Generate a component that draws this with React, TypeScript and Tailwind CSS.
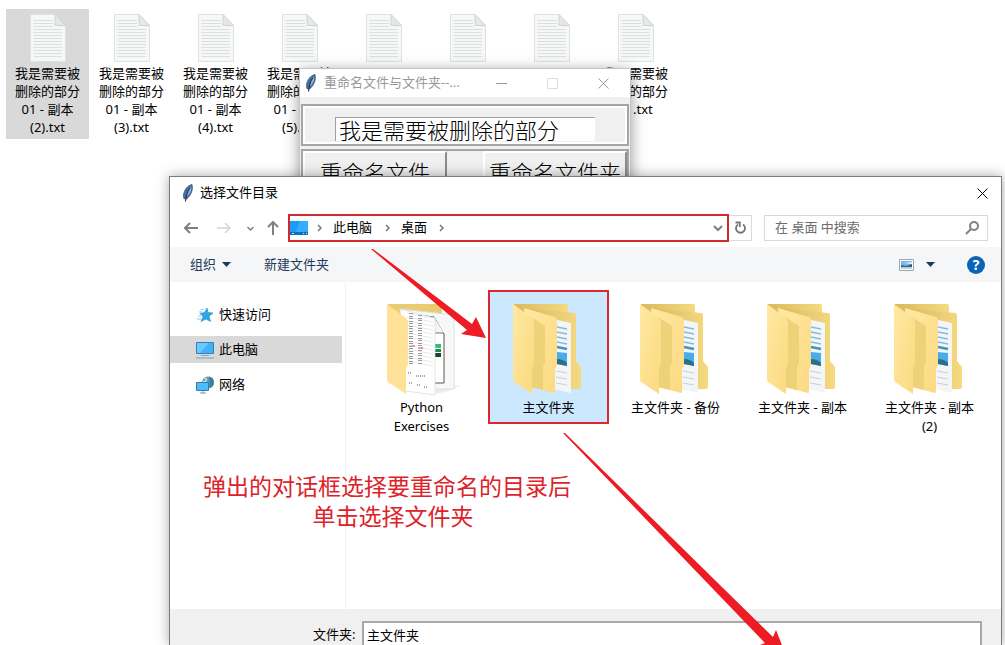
import { useState } from "react";

const files = [
  { id: 2, lines: ["我是需要被", "删除的部分", "01 - 副本", "(2).txt"] },
  { id: 3, lines: ["我是需要被", "删除的部分", "01 - 副本", "(3).txt"] },
  { id: 4, lines: ["我是需要被", "删除的部分", "01 - 副本", "(4).txt"] },
  { id: 5, lines: ["我是需要被", "删除的部分", "01 - 副本", "(5).txt"] },
  { id: 6, lines: [] },
  { id: 7, lines: [] },
  { id: 8, lines: [] },
  { id: 9, lines: ["我是需要被", "删除的部分", "01.txt"] },
];

const folders = [
  { name: "Python Exercises", kind: "sheets" },
  { name: "主文件夹", kind: "docs" },
  { name: "主文件夹 - 备份", kind: "docs" },
  { name: "主文件夹 - 副本", kind: "docs" },
  { name: "主文件夹 - 副本 (2)", kind: "docs" },
];

const TextFileIcon = () => (
  <svg width="36" height="48" viewBox="0 0 36 48" className="shrink-0">
    <path d="M.5.5H25L35.500 11.500V47.500H.5Z" fill="#f6f8f8" stroke="#dfe2e2" />
    {[6, 9, 12].map((y) => (
      <path key={y} d={`M3.500 ${y}.5H23`} stroke="#dcdfe0" />
    ))}
    {[15, 18, 21, 24, 27, 30, 33, 36, 39, 42].map((y) => (
      <path key={y} d={`M3.500 ${y}.5H32`} stroke="#dcdfe0" />
    ))}
    <path d="M25 .5V11.500H35.500Z" fill="#e6e8e8" stroke="#d0d3d3" />
  </svg>
);

const Feather = () => (
  <svg width="12" height="18" viewBox="0 0 12 18" className="shrink-0">
    <path d="M10 .5C5.500 1.500 2 6 1.500 11L1.800 14.500 4.500 15C8.500 12 11.500 6 10 .5Z" fill="#3d74aa" stroke="#33475e" strokeWidth=".7" />
    <path d="M9 2C6.500 5 4.800 9 4 13L6.500 11C9 8 9.800 5 9 2Z" fill="#8fb3d3" />
    <path d="M8 3.500C5.500 7 4 12 3.500 17.500" fill="none" stroke="#1a1f26" strokeWidth="1" />
  </svg>
);

const DocsFolder = () => (
  <svg width="72" height="92" viewBox="0 0 72 92">
    <defs>
      <linearGradient id="flap" x1="0" y1="0" x2="1" y2="1">
        <stop offset="0" stopColor="#ffe9a2" />
        <stop offset="1" stopColor="#fbd980" />
      </linearGradient>
      <linearGradient id="back" x1="0" y1="0" x2="1" y2="0">
        <stop offset="0" stopColor="#d9b95d" />
        <stop offset="1" stopColor="#f5da80" />
      </linearGradient>
    </defs>
    <path d="M1 1H53Q55 1 55 3V60H1Z" fill="url(#back)" />
    <path d="M11 5L61 10Q63 10 63 12V58L68 64V84Q68 86 66 86H50Z" fill="url(#back)" />
    <path d="M40 16L58 20V90L40 86Z" fill="#f3f5f6" />
    <path d="M44 24L54 26M44 29L54 31M44 34L54 36M44 39L54 41" stroke="#82bde0" strokeWidth="1.500" />
    <path d="M44 44L54 46" stroke="#3f94c5" strokeWidth="2.500" />
    <path d="M44 49L54 50V63L44 61Z" fill="#4bacec" />
    <path d="M44 56Q50 56 54 60V63L44 61Z" fill="#2c6f86" />
    <path d="M43 68L54 70M43 74L54 76M43 80L54 82" stroke="#ccd0d3" />
    <path d="M11 5L42 14Q44 15 44 17V62L42 66V89Q42 90 41 90L18 84Z" fill="url(#flap)" />
    <path d="M18 14L32 23V60L30 64V87L18 84Z" fill="#eed27a" />
    <path d="M0 1L19 15Q21 17 21 19V61L19 66V91L1 79Q0 78 0 76Z" fill="url(#flap)" />
  </svg>
);

const SheetsFolder = () => (
  <svg width="70" height="92" viewBox="0 0 70 92" className="overflow-visible">
    <path d="M50 84L74 82L62 88L48 91Z" fill="#ececec" />
    <path d="M1 1H53Q55 1 55 3V60H1Z" fill="#e9cc72" />
    <path d="M13 6L67 12V86H40Z" fill="#f8f8f8" stroke="#dedede" />
    <path d="M22 11L47 14L57 31V80H45" fill="#fff" stroke="#5a5747" />
    <path d="M47 14L46 30H57" fill="#f4f4f4" stroke="#777" />
    <path d="M47 41H54V45H47Z" fill="#36bd78" />
    <path d="M47 46H54V49H47Z" fill="#188c4e" />
    <path d="M47 50H54V54H47Z" fill="#15452c" />
    <path d="M13 6L48 15V92L18 88Z" fill="#fff" stroke="#d8d8d8" strokeWidth=".7" />
    {[13, 17, 21, 25, 29, 33, 37, 41, 45, 49, 53, 57, 61].map((y) => (
      <path key={y} d={`M20 ${y - 3}L46 ${y + 2}`} stroke="#dcdcdc" strokeWidth=".7" />
    ))}
    <path d="M24 10V62M33 12V62" stroke="#9a9a9a" strokeWidth="4" strokeDasharray="1 2 1 1" />
    <path d="M24 43H28M32 45H36" stroke="#e79a94" strokeWidth="2" />
    <path d="M21 70H24M29 73H38M22 80H26M30 82H33M37 84H41" stroke="#888" strokeWidth="1.500" strokeDasharray="1 1" />
    <path d="M0 1L19 15Q21 17 21 19V61L19 66V91L1 79Q0 78 0 76Z" fill="#ffe197" />
  </svg>
);

const CloseIcon = () => (
  <svg width="11" height="11" viewBox="0 0 11 11" fill="none" stroke="currentColor">
    <path d="M.5.5L10.500 10.500M10.500.5L.5 10.500" />
  </svg>
);

const Chevron = () => (
  <svg width="5" height="8" viewBox="0 0 5 8" fill="none" stroke="#777" strokeWidth="1.500">
    <path d="M1 1L4 4L1 7" />
  </svg>
);

const StarIcon = () => (
  <svg width="18" height="16" viewBox="0 0 18 16">
    <path d="M11 1L12 5.500L17 6L13 9.300L14.500 14.500L10 12L5 14.500L7 9.500L4 6.500L8.500 5.500Z" fill="#31a4ea" stroke="#2388c7" strokeWidth=".6" />
    <path d="M5 2.500H8M3 5H6M2 9H5M1 12H5" stroke="#8acaf2" />
  </svg>
);

const ComputerIcon = () => (
  <svg width="18" height="18" viewBox="0 0 18 18">
    <path d="M.5 1.500H17.500V12.500H.5Z" fill="#3fb2fb" stroke="#3583ad" />
    <path d="M1 2H13L4 12H1Z" fill="#6bc9ff" />
    <path d="M5 14.500H13" stroke="#88a6b9" />
    <path d="M0 17H18" stroke="#9eb3c2" strokeWidth="1.500" />
  </svg>
);

const NetworkIcon = () => (
  <svg width="18" height="18" viewBox="0 0 18 18">
    <circle cx="12" cy="6.500" r="6" fill="#5c9dbb" />
    <path d="M8 2Q12 3 10 5L7 6" stroke="#c1e2d9" strokeWidth="1.500" fill="none" />
    <path d="M13 .5A6 6 0 0 1 14 12Z" fill="#3d7f9e" />
    <path d="M.5 6.500H12.500V14.500H.5Z" fill="#4dbcfc" stroke="#327da6" />
    <path d="M4 17H10M7 15V17" stroke="#7b9aad" />
  </svg>
);

const places = [
  { name: "快速访问", icon: <StarIcon /> },
  { name: "此电脑", icon: <ComputerIcon /> },
  { name: "网络", icon: <NetworkIcon /> },
];

const Desktop = () => (
  <ul className="flex px-[6px] pt-[9px]">
    {files.map((file, i) => (
      <li
        key={file.id}
        className={`mr-px flex h-[130px] w-[83px] shrink-0 flex-col items-center pt-[5px] ${i === 0 ? "bg-[#d9d9d9]" : ""}`}
      >
        <TextFileIcon />
        <div className="mt-[2px] text-center leading-[18px]">
          {file.lines.map((line) => (
            <div key={line}>{line}</div>
          ))}
        </div>
      </li>
    ))}
  </ul>
);

const RenameWindow = () => {
  const [text, setText] = useState("我是需要被删除的部分");

  return (
    <section className="absolute top-[68px] left-[299px] h-[180px] w-[332px] border border-[#c4c4c4] bg-[#f0f0f0] shadow-[0_3px_14px_rgba(0,0,0,0.4)]">
      <header className="flex h-7 items-center bg-white pl-[5px] text-[#999]">
        <Feather />
        <h2 className="ml-[7px] flex-1 whitespace-nowrap">重命名文件与文件夹--...</h2>
        <button aria-label="最小化" className="flex w-[52px] justify-center">
          <svg width="11" height="11" stroke="currentColor"><path d="M0 5.500H11" /></svg>
        </button>
        <button aria-label="最大化" className="flex w-[50px] justify-center text-[#ddd]">
          <svg width="11" height="11" fill="none" stroke="currentColor"><path d="M.5.5H10.500V10.500H.5Z" /></svg>
        </button>
        <button aria-label="关闭" className="flex w-[53px] justify-center"><CloseIcon /></button>
      </header>
      <div className="mx-px mt-[7px] border-2 border-[#a5a5a5] font-['KaiTi','Noto_Sans_CJK_SC',sans-serif] text-[22px] font-light text-black">
        <div className="border-2 border-white px-[30px] pt-[9px] pb-px">
          <input
            aria-label="要删除的部分"
            value={text}
            onChange={(e) => setText(e.target.value)}
            className="block h-[24px] w-full border-t border-l border-[#a0a0a0] bg-white px-[3px] outline-none"
          />
        </div>
      </div>
      <div className="mx-px mt-[3px] flex justify-between border-2 border-[#a5a5a5] font-['KaiTi','Noto_Sans_CJK_SC',sans-serif] text-[22px] font-light text-black">
        <button className="h-10 w-[144px] border-2 border-t-white border-r-[#8c8c8c] border-b-[#8c8c8c] border-l-white">重命名文件</button>
        <button className="h-10 w-[144px] border-2 border-t-white border-r-[#8c8c8c] border-b-[#8c8c8c] border-l-white whitespace-nowrap">重命名文件夹</button>
      </div>
    </section>
  );
};

const NavBar = () => (
  <div className="flex h-[38px] shrink-0 items-center pr-[13px] pl-[14px] text-[#808080]">
    <button aria-label="后退" className="flex w-[14px] justify-center">
      <svg width="14" height="12" fill="none" stroke="currentColor" strokeWidth="2"><path d="M14 6H1M6 1L1 6L6 11" /></svg>
    </button>
    <button aria-label="前进" className="ml-[19px] flex w-[14px] justify-center text-[#d5d5d5]">
      <svg width="14" height="12" fill="none" stroke="currentColor" strokeWidth="1.500"><path d="M0 6H13M8 1L13 6L8 11" /></svg>
    </button>
    <button aria-label="最近的位置" className="ml-[15px] flex w-2 justify-center">
      <svg width="7" height="5" fill="none" stroke="currentColor" strokeWidth="1.500"><path d="M.5 1L3.500 4L6.500 1" /></svg>
    </button>
    <button aria-label="上移" className="ml-[12px] flex w-[14px] justify-center">
      <svg width="12" height="14" fill="none" stroke="currentColor" strokeWidth="2"><path d="M6 14V1M1 6L6 1L11 6" /></svg>
    </button>
    <div className="ml-2 flex h-[28px] flex-1 items-center border-2 border-[#cf2a32] text-black">
      <svg width="18" height="14">
        <path d="M0 0H18V14H0Z" fill="#1c9bf6" />
        <path d="M10 0H18V10L5 12Z" fill="#35adff" />
        <path d="M0 12.500H18" stroke="#0874be" strokeWidth="3" />
        <path d="M2 12.500H4M13 12.500H14M16 12.500H17" stroke="#c7e8ff" />
      </svg>
      <span className="mr-1 ml-[6px] flex w-[10px] justify-center"><Chevron /></span>
      <button className="px-[5px]">此电脑</button>
      <span className="ml-[5px] flex w-[10px] justify-center"><Chevron /></span>
      <button className="pr-3 pl-[9px]">桌面</button>
      <Chevron />
      <button aria-label="以前的位置" className="mr-[4px] ml-auto">
        <svg width="10" height="7" fill="none" stroke="#808080" strokeWidth="2"><path d="M1 1L5 5L9 1" /></svg>
      </button>
    </div>
    <button aria-label="刷新" className="flex h-[26px] w-[23px] items-center justify-center border border-l-0 border-[#dadada]">
      <svg width="13" height="14" viewBox="0 0 13 14" fill="none" stroke="#757575" strokeWidth="1.800">
        <path d="M9 3.500A4.500 4.500 0 1 1 4 3.500" />
        <path d="M1.500 1.500H5.800V6" />
      </svg>
    </button>
    <div className="ml-3 flex h-[26px] w-[224px] items-center border border-[#d9d9d9] pr-2 pl-[10px]">
      <input aria-label="搜索" placeholder="在 桌面 中搜索" className="min-w-0 flex-1 outline-none placeholder:text-[#6d6d6d]" />
      <svg width="14" height="14" fill="none" stroke="#808080" strokeWidth="2">
        <circle cx="9" cy="5" r="4" />
        <path d="M6 8L1 13" />
      </svg>
    </div>
  </div>
);

const Toolbar = () => (
  <div className="flex h-[35px] shrink-0 items-center bg-[#f5f6f7] pr-4 pl-5 text-[#1e395b]">
    <button className="flex items-center gap-[6px]">
      组织
      <svg width="9" height="5"><path d="M0 0H9L4.500 5Z" fill="currentColor" /></svg>
    </button>
    <button className="ml-[33px]">新建文件夹</button>
    <button aria-label="更改视图" className="ml-auto flex items-center gap-[12px]">
      <svg width="15" height="12">
        <path d="M.5.5H14.500V11.500H.5Z" fill="#fff" stroke="#a0a5ab" />
        <path d="M2 2H13V10H2Z" fill="#7ab8ec" />
        <path d="M2 6L7 7L13 5V8H2Z" fill="#2d6675" />
        <path d="M5 4L13 3V5Z" fill="#e5f3fb" />
        <path d="M2 8H13V10H2Z" fill="#b5d4e9" />
      </svg>
      <svg width="9" height="5"><path d="M0 0H9L4.500 5Z" fill="currentColor" /></svg>
    </button>
    <button aria-label="帮助" className="ml-8 h-[18px] w-[18px] rounded-full bg-[#0963b8] text-[14px] leading-[18px] font-bold text-white">?</button>
  </div>
);

const FolderDialog = () => {
  const [folder, setFolder] = useState("主文件夹");

  return (
    <section className="absolute top-[176px] right-[3px] bottom-0 left-[169px] flex flex-col border border-b-0 border-[#7b7b7b] bg-white shadow-[0_0_12px_rgba(0,0,0,0.35)]">
      <header className="flex h-8 shrink-0 items-center pr-[13px] pl-[12px]">
        <Feather />
        <h1 className="ml-[6px] flex-1">选择文件目录</h1>
        <button aria-label="关闭"><CloseIcon /></button>
      </header>
      <NavBar />
      <Toolbar />
      <div className="flex min-h-0 flex-1">
        <nav className="flex w-[176px] shrink-0 flex-col gap-2 border-r border-[#f3f3f3] pt-[19px] pr-[3px]">
          {places.map((place) => (
            <a
              key={place.name}
              href="#"
              className={`flex h-[27px] items-center gap-[5px] pl-[26px] ${place.name === "此电脑" ? "bg-[#d9d9d9]" : ""}`}
            >
              {place.icon}
              {place.name}
            </a>
          ))}
        </nav>
        <div className="flex flex-1 items-start gap-[6px] pt-[8px] pl-[15px]">
          {folders.map((item) => {
            const isSelected = item.name === folder;
            return (
              <button
                key={item.name}
                onClick={() => setFolder(item.name)}
                className={`flex min-h-[134px] w-[121px] shrink-0 flex-col items-center border-2 pt-[11px] ${isSelected ? "border-[#dd2630] bg-[#cce8ff]" : "border-transparent"}`}
              >
                {item.kind === "sheets" ? <SheetsFolder /> : <DocsFolder />}
                <span className="mt-[3px] w-[100px] text-center leading-[19px]">{item.name}</span>
              </button>
            );
          })}
        </div>
      </div>
      <footer className="flex h-9 shrink-0 items-start overflow-hidden bg-[#f0f0f0] pt-3 pr-[19px] pl-[143px]">
        <label htmlFor="folder" className="w-[49px] shrink-0 leading-[26px] whitespace-nowrap">文件夹:</label>
        <input
          id="folder"
          value={folder}
          onChange={(e) => setFolder(e.target.value)}
          className="h-[26px] min-w-0 flex-1 border-2 border-[#a8a8a8] bg-white px-[3px] outline-none"
        />
      </footer>
    </section>
  );
};

// Red arrows and hint text on top of the windows
const Annotations = () => (
  <div className="pointer-events-none absolute inset-0 overflow-hidden">
    <svg width="1005" height="700" fill="#ed1c24">
      <path d="M371 249L373 249L472 324L476 317L486 338L461 334L467 330Z" />
      <path d="M563 433L565 433L773 637L776 630L789 663L752 648L765 643Z" />
    </svg>
    <p className="absolute top-[471px] left-[203px] text-center text-[23px] leading-[30px] whitespace-nowrap text-[#dd2229]">
      弹出的对话框选择要重命名的目录后
      <span className="block pl-3">单击选择文件夹</span>
    </p>
  </div>
);

export default function App() {
  return (
    <main className="relative h-screen overflow-hidden bg-white font-['Noto_Sans','Noto_Sans_CJK_SC',sans-serif] text-[13px] text-black">
      <Desktop />
      <RenameWindow />
      <FolderDialog />
      <Annotations />
    </main>
  );
}
